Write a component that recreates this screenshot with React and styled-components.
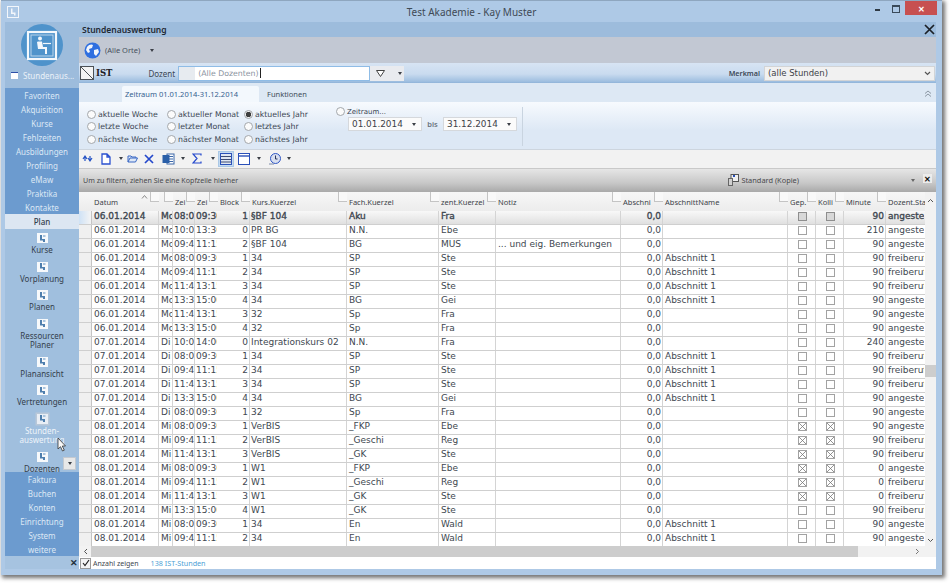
import React from 'react';
import styled, { createGlobalStyle } from 'styled-components';

const GlobalStyle = createGlobalStyle`
    html, body {
        margin: 0;
        padding: 0;
        background: #ffffff;
        font-family: "DejaVu Sans", sans-serif;
    }
`;

const UI_FONT = '"Noto Sans", "Open Sans", sans-serif';
const GRID_FONT = '"DejaVu Sans", sans-serif';

const Page = styled.div`
    width: 950px;
    height: 583px;
    overflow: hidden;
    background: #ffffff;
`;

const AppWindow = styled.div`
    display: flex;
    flex-direction: column;
    width: 941px;
    height: 575px;
    margin-left: 1px;
    background: #aec9e6;
    box-shadow: 2px 2px 4px 1px rgba(40, 40, 40, 0.65);
`;

const TitleBar = styled.div`
    position: relative;
    display: flex;
    align-items: center;
    justify-content: center;
    flex: 0 0 22px;
    font: 10px ${UI_FONT};
    color: #3f4a55;
    border-top: 1px solid #8ea6bf;
    box-sizing: border-box;
`;

const TitleIcon = styled.div`
    position: absolute;
    left: 6px;
    top: 5px;
    display: flex;
    align-items: center;
    justify-content: center;
    width: 10px;
    height: 10px;
    border: 1px solid #f2f6fb;
`;

const WindowButtons = styled.div`
    position: absolute;
    right: 5px;
    top: 0;
    display: flex;
    align-items: flex-start;
`;

const MinButton = styled.div`
    width: 5px;
    height: 2px;
    margin: 8px 12px 0 0;
    background: #2f3a45;
`;

const MaxButton = styled.div`
    width: 6px;
    height: 5px;
    margin: 4px 5px 0 0;
    border: 1px solid #3a4a5a;
    border-top-width: 2px;
`;

const CloseButton = styled.div`
    display: flex;
    align-items: center;
    justify-content: center;
    width: 32px;
    height: 14px;
    background: #c75050;
    color: #ffffff;
    font: bold 8px ${UI_FONT};
`;

const Body = styled.div`
    display: flex;
    flex: 1;
    min-height: 0;
    padding: 0 6px 6px 4px;
`;

const Sidebar = styled.div`
    display: flex;
    flex-direction: column;
    flex: 0 0 74px;
    background: #a0bfde;
    font: 8px ${UI_FONT};
`;

const SidebarHead = styled.div`
    display: flex;
    flex-direction: column;
    align-items: center;
    flex: 0 0 66px;
    padding-top: 1px;
    box-sizing: border-box;
    background: #9dbcdc;
`;

const ModuleLabel = styled.div`
    display: flex;
    align-items: center;
    align-self: stretch;
    gap: 5px;
    margin-top: 3px;
    padding-left: 6px;
    font-size: 8px;
    color: #eaf1f8;
    white-space: nowrap;
`;

const ModuleMark = styled.div`
    width: 7px;
    height: 6px;
    background: #ffffff;
    border-top: 1px solid #2d4fa8;
`;

const MenuBlock = styled.div`
    display: flex;
    flex-direction: column;
    flex: 0 0 auto;
    background: #6c9bcf;
`;

const MenuItem = styled.div`
    display: flex;
    align-items: center;
    justify-content: center;
    height: 14px;
    color: #dce8f5;
    white-space: nowrap;
`;

const ActiveMenu = styled.div`
    display: flex;
    align-items: center;
    justify-content: center;
    flex: 0 0 15px;
    background: #dce6f2;
    color: #33404d;
    font-weight: 500;
`;

const NavPanel = styled.div`
    position: relative;
    display: flex;
    flex-direction: column;
    flex: 1;
    min-height: 0;
    padding-top: 4px;
    box-sizing: border-box;
    background: #a0bfde;
`;

const NavItem = styled.div`
    display: flex;
    flex-direction: column;
    align-items: center;
    flex: 0 0 ${p => (p.$double ? 38 : 28.5)}px;
    box-sizing: border-box;
    color: ${p => (p.$active ? '#eef4fa' : '#34404c')};
    line-height: 9px;
    text-align: center;
`;

const NavLabel = styled.div`
    margin-top: 2px;
    white-space: pre-line;
`;

const NavIconBox = styled.div`
    display: flex;
    align-items: center;
    justify-content: center;
    width: 11px;
    height: 10px;
    background: ${p => (p.$active ? '#e9eef5' : '#f7f9fb')};
    box-shadow: ${p => (p.$active ? '0 0 0 1.5px #b9c8d8' : 'none')};
`;

const MoreButton = styled.div`
    position: absolute;
    right: 4px;
    bottom: 3px;
    display: flex;
    align-items: center;
    justify-content: center;
    width: 11px;
    height: 11px;
    background: #e8e8e8;
    box-shadow: 0 0 0 1px #c4c9d0;
`;

const MouseCursor = styled.svg`
    position: absolute;
    left: 52px;
    top: 208px;
`;

const SidebarFoot = styled.div`
    display: flex;
    align-items: center;
    justify-content: flex-end;
    flex: 0 0 12px;
    padding-right: 1px;
    background: #a6c3e0;
    color: #22303c;
    font: bold 9px ${UI_FONT};
`;

const Main = styled.div`
    display: flex;
    flex-direction: column;
    flex: 1;
    min-width: 0;
`;

const ModuleTitle = styled.div`
    display: flex;
    align-items: center;
    justify-content: space-between;
    flex: 0 0 15px;
    padding: 0 1px 1px 3px;
    box-sizing: border-box;
    background: #9dbcdc;
    color: #1f2933;
    font: 600 8.5px ${UI_FONT};
`;

const BigClose = styled.svg`
    display: block;
`;

const LocationBar = styled.div`
    display: flex;
    align-items: center;
    flex: 0 0 26px;
    padding-left: 5px;
    background: #c2c8d3;
    color: #46505c;
    font: 7.5px ${UI_FONT};
`;

const LocationText = styled.span`
    margin-left: 4px;
`;

const Caret = styled.div`
    flex: none;
    width: 0;
    height: 0;
    margin-left: ${p => p.$ml || 0}px;
    border-left: 2.5px solid transparent;
    border-right: 2.5px solid transparent;
    border-top: 3px solid ${p => p.$color || '#3b3f46'};
`;

const FilterBar = styled.div`
    display: flex;
    align-items: center;
    flex: 0 0 20px;
    padding-left: 1px;
    background: linear-gradient(#d7e4f3 0%, #c9dbef 55%, #9fbfe0 92%, #8fb3d8 100%);
`;

const ActualBox = styled.div`
    flex: 0 0 14px;
    height: 14px;
    background: #f4f4f4;
    border: 1px solid #4c5156;
    box-sizing: border-box;
    background-image: linear-gradient(45deg, #f4f4f4 46%, #4c5156 48%, #4c5156 52%, #f4f4f4 54%);
`;

const ActualLabel = styled.div`
    margin-left: 2px;
    color: #1c2026;
    font: bold 8.5px "DejaVu Serif", serif;
`;

const DozentLabel = styled.div`
    margin-left: 36px;
    color: #3a4654;
    font: 8px ${UI_FONT};
`;

const DozentInput = styled.div`
    display: flex;
    align-items: center;
    width: 192px;
    height: 15px;
    margin-left: 3px;
    box-sizing: border-box;
    background: #ffffff;
    border: 1px solid #8fbce6;
    color: #8b93a0;
    font: 7.8px ${GRID_FONT};
`;

const DozentStub = styled.div`
    align-self: stretch;
    flex: 0 0 16px;
    margin-right: 3px;
    background: #e7ebf0;
`;

const TextCaret = styled.span`
    width: 1px;
    height: 10px;
    margin-left: 1px;
    background: #222222;
`;

const FilterButtons = styled.div`
    display: flex;
    align-items: center;
    width: 34px;
    height: 15px;
    padding-left: 6px;
    box-sizing: border-box;
    background: #e9ebef;
`;

const MerkmalLabel = styled.div`
    margin-left: auto;
    color: #3b4856;
    font: 600 7.2px ${UI_FONT};
`;

const MerkmalSelect = styled.div`
    display: flex;
    align-items: center;
    justify-content: space-between;
    width: 171px;
    height: 15px;
    margin: 0 1px 0 4px;
    padding: 0 3px 0 3px;
    box-sizing: border-box;
    background: #f1f1f1;
    border: 1px solid #d2d4d6;
    color: #3d4148;
    font: 8.5px ${GRID_FONT};
`;

const TabStrip = styled.div`
    display: flex;
    align-items: flex-end;
    flex: 0 0 19px;
    padding-left: 43px;
    background: #dde8f4;
    font: 7.5px ${UI_FONT};
`;

const ActiveTab = styled.div`
    display: flex;
    align-items: center;
    height: 16px;
    padding: 0 24px 0 3px;
    box-sizing: border-box;
    width: 137px;
    white-space: nowrap;
    background: #f3f8fd;
    border-radius: 2px 2px 0 0;
    color: #33618f;
`;

const Tab = styled.div`
    display: flex;
    align-items: center;
    height: 16px;
    margin-left: 8px;
    color: #3f4c5a;
`;

const CollapseIcon = styled.svg`
    margin: 0 4px 5px auto;
`;

const Ribbon = styled.div`
    display: flex;
    flex: 0 0 45px;
    box-sizing: border-box;
    padding: 6px 0 3px 8px;
    background: linear-gradient(#f7fafe, #dde8f5 60%);
    border-bottom: 1px solid #cdd5de;
    font: 8px ${GRID_FONT};
    color: #3a4552;
`;

const RadioGrid = styled.div`
    display: grid;
    grid-template-columns: 80px 77px 92px;
    grid-auto-rows: 12.5px;
`;

const RadioRow = styled.div`
    display: flex;
    align-items: center;
    gap: 2px;
    white-space: nowrap;
    font-size: ${p => (p.$small ? 7 : 7.8)}px;
`;

const RadioDot = styled.div`
    flex: none;
    width: 9px;
    height: 9px;
    box-sizing: border-box;
    border-radius: 50%;
    background: ${p => (p.$on ? 'radial-gradient(circle, #3f3f3f 0 2.5px, #f4f4f4 3px)' : '#fbfbfb')};
    border: 1px solid #a3a7ab;
`;

const RangeGroup = styled.div`
    display: flex;
    flex-direction: column;
    margin-top: -1px;
    padding-right: 5px;
    border-right: 1px solid #c9d4e0;
`;

const RangeRow = styled.div`
    display: flex;
    align-items: center;
    margin-top: 1px;
    padding-left: 12px;
`;

const DateField = styled.div`
    display: flex;
    align-items: center;
    justify-content: space-between;
    width: 74px;
    height: 14px;
    padding: 0 5px 0 3px;
    box-sizing: border-box;
    background: #fbfbfb;
    border: 1px solid #d5d8dc;
    color: #3d4148;
    font-size: 8.9px;
`;

const BisLabel = styled.div`
    width: 21px;
    text-align: center;
    font: 600 7.5px ${UI_FONT};
    color: #6a7480;
`;

const Toolbar = styled.div`
    display: flex;
    align-items: center;
    flex: 0 0 19px;
    padding-left: 3px;
    box-sizing: border-box;
    background: #f2f2f2;
    border-bottom: 1px solid #c9c9c9;
`;

const ToolSlot = styled.div`
    display: flex;
    align-items: center;
    justify-content: center;
    flex: none;
    width: ${p => p.$w}px;
    height: 16px;
    margin-left: ${p => p.$ml || 0}px;
    background: ${p => (p.$on ? '#c5daf0' : 'transparent')};
    box-shadow: ${p => (p.$on ? 'inset 0 0 0 1px #aac8e6' : 'none')};
`;

const GroupBar = styled.div`
    display: flex;
    align-items: center;
    flex: 0 0 23px;
    padding: 0 3px 0 4px;
    box-sizing: border-box;
    background: linear-gradient(#e6e6e6, #c8c8c8 60%, #a9a9a9);
    color: #49494c;
    font: 7.1px ${UI_FONT};
`;

const LayoutName = styled.div`
    display: flex;
    align-items: center;
    gap: 2px;
    margin-left: auto;
    margin-right: 112px;
    font-size: 7.4px;
`;

const GroupClose = styled.div`
    display: flex;
    align-items: center;
    justify-content: center;
    width: 9px;
    height: 9px;
    margin: 0 1px 3px 8px;
    background: #ececec;
    color: #111111;
    font: bold 8px ${UI_FONT};
`;

const GridArea = styled.div`
    display: flex;
    flex: 1;
    min-height: 0;
    background: #ffffff;
`;

const GridTable = styled.div`
    flex: 1;
    min-width: 0;
    overflow: hidden;
`;

const COLUMNS = '13px 67px 14px 22px 23px 32px 97px 92px 57px 125px 42px 125px 28px 28px 42px 39px';

const HeaderRow = styled.div`
    display: grid;
    grid-template-columns: ${COLUMNS};
    height: 19px;
    background: linear-gradient(#f7f7f7, #ececec);
`;

const HeaderCell = styled.div`
    position: relative;
    display: flex;
    align-items: flex-start;
    padding: 5px 0 0 2px;
    box-sizing: border-box;
    overflow: hidden;
    white-space: nowrap;
    color: #3c4248;
    font: 7.5px / 10px ${UI_FONT};

    &::after {
        content: '';
        display: ${p => (p.$plain ? 'none' : 'block')};
        position: absolute;
        right: 0;
        top: 0;
        width: 8px;
        height: 9px;
        background: #f9f9f9;
        border-left: 1px solid #c4c4c4;
        border-bottom: 1px solid #c4c4c4;
    }
`;

const SortArrow = styled.svg`
    position: absolute;
    right: 11px;
    top: 3px;
    z-index: 1;
`;

const DataRow = styled.div`
    display: grid;
    grid-template-columns: ${COLUMNS};
    grid-template-rows: 13px;
    height: 14px;
    box-sizing: border-box;
    border-bottom: 1px solid #cfcfcf;
    background: ${p => (p.$current ? 'linear-gradient(#f8f8f8, #e0e0e0)' : '#ffffff')};
    color: #3e4750;
    font: normal 9px / 11px ${GRID_FONT};
    -webkit-text-stroke: ${p => (p.$current ? '0.35px #3e4750' : '0')};
`;

const SelectorCell = styled.div`
    background: ${p => (p.$current ? 'linear-gradient(90deg, #cfe2f6, #f4f4f4)' : '#f0f0f0')};
    border-right: 1px solid #c4c4c4;
`;

const DataCell = styled.div`
    display: flex;
    align-items: flex-start;
    justify-content: ${p => (p.$align === 'right' ? 'flex-end' : p.$align === 'center' ? 'center' : 'flex-start')};
    padding: ${p => (p.$align === 'center' ? 1 : 0)}px ${p => (p.$align === 'right' ? 1 : 0)}px 0 ${p => (p.$align === 'right' ? 0 : p.$pad ?? 2)}px;
    box-sizing: border-box;
    overflow: hidden;
    white-space: nowrap;
    border-right: 1px solid ${p => (p.$divider ? '#d4d4d4' : 'transparent')};
`;

const CheckMark = styled.svg`
    display: block;
`;

const VScroll = styled.div`
    display: flex;
    flex-direction: column;
    align-items: center;
    flex: 0 0 11px;
    background: #f2f2f2;
`;

const ScrollUp = styled.svg`
    margin-top: 6px;
`;

const ScrollThumb = styled.div`
    flex: 0 0 12px;
    align-self: stretch;
    margin-top: 162px;
    background: #cdcdcd;
`;

const ScrollDown = styled.svg`
    margin-top: auto;
    margin-bottom: 3px;
`;

const HScroll = styled.div`
    display: flex;
    align-items: stretch;
    flex: 0 0 11px;
    background: #f2f2f2;
`;

const HScrollEnd = styled.div`
    display: flex;
    align-items: center;
    justify-content: ${p => p.$justify};
    flex: ${p => p.$flex};
    padding: 0 ${p => p.$pad}px;
    background: ${p => p.$bg || 'transparent'};
`;

const HThumb = styled.div`
    flex: 0 0 767px;
    background: #cdcdcd;
`;

const StatusBar = styled.div`
    display: flex;
    align-items: center;
    flex: 0 0 12px;
    padding-left: 1px;
    background: #ffffff;
    color: #3e4750;
    font: 7px ${UI_FONT};
`;

const StatusCheck = styled.div`
    display: flex;
    align-items: center;
    justify-content: center;
    width: 9px;
    height: 9px;
    margin-right: 2px;
    background: #f4f4f4;
    border: 1px solid #9a9a9a;
`;

const StatusCount = styled.div`
    margin-left: 12px;
    color: #4d9fd6;
    font-size: 7.2px;
`;

const LogoMark = () => (
    <svg width="44" height="44" viewBox="0 0 44 44">
        <circle cx="22" cy="22" r="21" fill="#4f93cb" />
        <rect x="8" y="9" width="28" height="27" fill="#4f93cb" stroke="#f4f8fc" strokeWidth="2.2" />
        <rect x="11" y="12" width="22" height="21" fill="none" stroke="#bcd6ec" strokeWidth="1" />
        <circle cx="20" cy="15.500" r="2" fill="#f4f8fc" />
        <path d="M18 18.500h4l1 5.500h4v7h-2v-5h-7l-1-7z" fill="#f4f8fc" />
        <path d="M23 20.500h8" stroke="#f4f8fc" strokeWidth="1.200" />
    </svg>
);

const NavGlyph = () => (
    <svg width="9" height="9" viewBox="0 0 9 9">
        <path d="M2 1h2v4h3v3H5V6.500H2z" fill="#4f7fae" />
        <rect x="5" y="1" width="2.500" height="2" fill="#a9c4de" />
    </svg>
);

const Funnel = () => (
    <svg width="9" height="7" viewBox="0 0 9 7">
        <path d="M0.500 0.500h8L4.500 6.500z" fill="#ffffff" stroke="#444444" />
    </svg>
);

const Globe = ({ size = 17 }) => (
    <svg width={size} height={size} viewBox="0 0 17 17">
        <circle cx="8.500" cy="8.500" r="8" fill="#2f6fe0" />
        <path d="M3 5c2-3 5-3 6-2l-1 3-3 1 1 3-2 1-2-3zM10 8l4-1 1 3-3 4-2-2z" fill="#f3f6fb" />
    </svg>
);

const ToolIcons = {
    sync: (
        <svg width="11" height="9" viewBox="0 0 11 9">
            <path d="M1 5l2-3 2 3M3 2v5M10 4L8 7 6 4M8 7V2" fill="none" stroke="#2452c4" strokeWidth="1.2" />
        </svg>
    ),
    doc: (
        <svg width="10" height="12" viewBox="0 0 10 12">
            <path d="M1 1h5l3 3v7H1zM6 1v3h3" fill="#ffffff" stroke="#2a50d0" strokeWidth="1.3" />
        </svg>
    ),
    open: (
        <svg width="11" height="9" viewBox="0 0 11 9">
            <path d="M1 8V2h3l1 1h4v1M1 8l2-4h7.500l-2 4z" fill="#dfe9f7" stroke="#3a68c4" />
        </svg>
    ),
    del: (
        <svg width="10" height="10" viewBox="0 0 10 10">
            <path d="M1 1l8 8M9 1L1 9" stroke="#2448cc" strokeWidth="1.7" />
        </svg>
    ),
    word: (
        <svg width="13" height="12" viewBox="0 0 13 12">
            <rect x="5" y="1" width="7" height="10" fill="#ffffff" stroke="#3a66a8" />
            <path d="M7 3.500h4M7 6h4M7 8.500h4" stroke="#3a66a8" />
            <rect x="0.500" y="2" width="7" height="8" fill="#2a5fa8" />
        </svg>
    ),
    sigma: (
        <svg width="10" height="11" viewBox="0 0 10 11">
            <path d="M9 2.500V1H1l4 4.500L1 10h8V8.500" fill="none" stroke="#2448cc" strokeWidth="1.2" />
        </svg>
    ),
    panes: (
        <svg width="12" height="12" viewBox="0 0 12 12">
            <rect x="0.500" y="0.500" width="11" height="11" fill="#dfe6f2" stroke="#2a50b8" />
            <path d="M1 3.500h10M1 6.500h10M1 9h10" stroke="#3e4c74" />
        </svg>
    ),
    pane: (
        <svg width="12" height="12" viewBox="0 0 12 12">
            <rect x="0.500" y="0.500" width="11" height="11" fill="#ffffff" stroke="#2a50b8" />
            <path d="M1 3h10" stroke="#2a50b8" strokeWidth="1.4" />
        </svg>
    ),
    clock: (
        <svg width="12" height="12" viewBox="0 0 12 12">
            <circle cx="6.500" cy="5.500" r="5" fill="#d8dff0" stroke="#2f56c4" />
            <path d="M6.500 2.500v3.500h2" fill="none" stroke="#27355e" />
            <path d="M0 11h5" stroke="#7c8aa8" />
        </svg>
    ),
};

const TOOLS = [
    { icon: 'sync', w: 11 },
    { icon: 'doc', w: 10, ml: 8 },
    { caret: true, ml: 8 },
    { icon: 'open', w: 11, ml: 4 },
    { icon: 'del', w: 10, ml: 6 },
    { icon: 'word', w: 13, ml: 8 },
    { caret: true, ml: 6 },
    { icon: 'sigma', w: 10, ml: 7 },
    { caret: true, ml: 9 },
    { icon: 'panes', w: 16, ml: 3, on: true },
    { icon: 'pane', w: 12, ml: 4 },
    { caret: true, ml: 7 },
    { icon: 'clock', w: 12, ml: 8 },
    { caret: true, ml: 6 },
];

const MENU_TOP = ['Favoriten', 'Akquisition', 'Kurse', 'Fehlzeiten', 'Ausbildungen', 'Profiling', 'eMaw', 'Praktika', 'Kontakte'];
const MENU_BOTTOM = ['Faktura', 'Buchen', 'Konten', 'Einrichtung', 'System', 'weitere'];

const NAV_ITEMS = [
    { label: 'Kurse' },
    { label: 'Vorplanung' },
    { label: 'Planen' },
    { label: 'Ressourcen\nPlaner', double: true },
    { label: 'Planansicht' },
    { label: 'Vertretungen' },
    { label: 'Stunden-\nauswertung', double: true, active: true },
    { label: 'Dozenten' },
];

const RADIOS = [
    ['aktuelle Woche', 'aktueller Monat', 'aktuelles Jahr'],
    ['letzte Woche', 'letzter Monat', 'letztes Jahr'],
    ['nächste Woche', 'nächster Monat', 'nächstes Jahr'],
];

const HEADERS = ['', 'Datum', '', 'Zei', 'Zei', 'Block', 'Kurs.Kuerzel', 'Fach.Kuerzel', 'zent.Kuerzel', 'Notiz', 'Abschni', 'AbschnittName', 'Gep.', 'Kolli', 'Minute', 'Dozent.Status'];

const SLOTS = {
    1: ['08:00', '09:30'],
    2: ['09:45', '11:15'],
    3: ['11:45', '13:15'],
    4: ['13:30', '15:00'],
};

const A = 'angestellt';
const F = 'freiberuflich';
const S1 = 'Abschnitt 1';

function row(date, day, block, kurs, fach, zent, name, checked, minutes, status) {
    const [from, to] = SLOTS[block];
    return { date, day, from, to, block, kurs, fach, zent, note: '', name, checked, minutes, status };
}

const ROWS = [
    { ...row('06.01.2014', 'Mo', 1, '§BF 104', 'Aku', 'Fra', '', false, 90, A), current: true },
    { ...row('06.01.2014', 'Mo', 1, 'PR BG', 'N.N.', 'Ebe', '', false, 210, A), from: '10:00', to: '13:30', block: 0 },
    { ...row('06.01.2014', 'Mo', 2, '§BF 104', 'BG', 'MUS', '', false, 90, A), note: '... und eig. Bemerkungen' },
    row('06.01.2014', 'Mo', 1, '34', 'SP', 'Ste', S1, false, 90, F),
    row('06.01.2014', 'Mo', 2, '34', 'SP', 'Ste', S1, false, 90, F),
    row('06.01.2014', 'Mo', 3, '34', 'SP', 'Ste', S1, false, 90, F),
    row('06.01.2014', 'Mo', 4, '34', 'BG', 'Gei', S1, false, 90, A),
    row('06.01.2014', 'Mo', 3, '32', 'Sp', 'Fra', '', false, 90, A),
    row('06.01.2014', 'Mo', 4, '32', 'Sp', 'Fra', '', false, 90, A),
    { ...row('07.01.2014', 'Di', 1, 'Integrationskurs 02', 'N.N.', 'Fra', '', false, 240, A), from: '10:00', to: '14:00', block: 0 },
    row('07.01.2014', 'Di', 1, '34', 'SP', 'Ste', S1, false, 90, F),
    row('07.01.2014', 'Di', 2, '34', 'SP', 'Ste', S1, false, 90, F),
    row('07.01.2014', 'Di', 3, '34', 'SP', 'Ste', S1, false, 90, F),
    row('07.01.2014', 'Di', 4, '34', 'BG', 'Gei', S1, false, 90, A),
    row('07.01.2014', 'Di', 1, '32', 'Sp', 'Fra', '', false, 90, A),
    row('08.01.2014', 'Mi', 1, 'VerBIS', '_FKP', 'Ebe', '', true, 90, A),
    row('08.01.2014', 'Mi', 2, 'VerBIS', '_Geschi', 'Reg', '', true, 90, F),
    row('08.01.2014', 'Mi', 3, 'VerBIS', '_GK', 'Ste', '', true, 90, F),
    row('08.01.2014', 'Mi', 1, 'W1', '_FKP', 'Ebe', '', true, 0, A),
    row('08.01.2014', 'Mi', 2, 'W1', '_Geschi', 'Reg', '', true, 0, F),
    row('08.01.2014', 'Mi', 3, 'W1', '_GK', 'Ste', '', true, 0, F),
    row('08.01.2014', 'Mi', 4, 'W1', '_GK', 'Ste', '', false, 90, F),
    row('08.01.2014', 'Mi', 1, '34', 'En', 'Wald', S1, false, 90, A),
    row('08.01.2014', 'Mi', 2, '34', 'En', 'Wald', S1, false, 90, A),
];

function CheckBox({ crossed, current }) {
    return (
        <CheckMark width="9" height="9" viewBox="0 0 9 9">
            <rect x="0.500" y="0.500" width="8" height="8" fill={current ? '#d8d8d8' : '#ffffff'} stroke={current ? '#8e8e8e' : '#a2a2a2'} />
            {crossed && <path d="M1 1l7 7M8 1L1 8" stroke="#777777" strokeWidth="0.8" />}
        </CheckMark>
    );
}

function GridRow({ data }) {
    return (
        <DataRow $current={data.current}>
            <SelectorCell $current={data.current} />
            <DataCell $divider>{data.date}</DataCell>
            <DataCell $divider>{data.day}</DataCell>
            <DataCell $divider $pad={1}>{data.from}</DataCell>
            <DataCell $pad={1}>{data.to}</DataCell>
            <DataCell $align="right" $divider>{data.block}</DataCell>
            <DataCell $divider $pad={1}>{data.kurs}</DataCell>
            <DataCell $divider>{data.fach}</DataCell>
            <DataCell $divider>{data.zent}</DataCell>
            <DataCell $divider>{data.note}</DataCell>
            <DataCell $align="right" $divider>0,0</DataCell>
            <DataCell $divider>{data.name}</DataCell>
            <DataCell $align="center" $divider><CheckBox crossed={data.checked} current={data.current} /></DataCell>
            <DataCell $align="center" $divider><CheckBox crossed={data.checked} current={data.current} /></DataCell>
            <DataCell $align="right" $divider>{data.minutes}</DataCell>
            <DataCell $pad={2}>{data.status}</DataCell>
        </DataRow>
    );
}

function AppSidebar() {
    return (
        <Sidebar>
            <SidebarHead>
                <LogoMark />
                <ModuleLabel><ModuleMark />Stundenaus...</ModuleLabel>
            </SidebarHead>
            <MenuBlock>
                {MENU_TOP.map(item => <MenuItem key={item}>{item}</MenuItem>)}
            </MenuBlock>
            <ActiveMenu>Plan</ActiveMenu>
            <NavPanel>
                {NAV_ITEMS.map(item => (
                    <NavItem key={item.label} $double={item.double} $active={item.active}>
                        <NavIconBox $active={item.active}><NavGlyph /></NavIconBox>
                        <NavLabel>{item.label}</NavLabel>
                    </NavItem>
                ))}
                <MoreButton><Caret /></MoreButton>
                <MouseCursor width="9" height="15" viewBox="0 0 9 15">
                    <path d="M1 1v11l2.500-2.300L5.500 14l1.800-.8-2-4.200H8.500z" fill="#f8f8f8" stroke="#333333" strokeWidth="0.8" />
                </MouseCursor>
            </NavPanel>
            <MenuBlock>
                {MENU_BOTTOM.map(item => <MenuItem key={item}>{item}</MenuItem>)}
            </MenuBlock>
            <SidebarFoot>✕</SidebarFoot>
        </Sidebar>
    );
}

function App() {
    return (
        <Page>
            <GlobalStyle />
            <AppWindow>
                <TitleBar>
                    <TitleIcon>
                        <svg width="8" height="8" viewBox="0 0 8 8">
                            <path d="M2 0.500h1.500v4h3v3h-1.500V6H2z" fill="#f2f6fb" />
                        </svg>
                    </TitleIcon>
                    Test Akademie - Kay Muster
                    <WindowButtons>
                        <MinButton />
                        <MaxButton />
                        <CloseButton>✕</CloseButton>
                    </WindowButtons>
                </TitleBar>
                <Body>
                    <AppSidebar />
                    <Main>
                        <ModuleTitle>
                            Stundenauswertung
                            <BigClose width="11" height="11" viewBox="0 0 11 11">
                                <path d="M1 1l9 9M10 1l-9 9" stroke="#1b2026" strokeWidth="1.7" />
                            </BigClose>
                        </ModuleTitle>
                        <LocationBar>
                            <Globe />
                            <LocationText>(Alle Orte)</LocationText>
                            <Caret $ml={10} />
                        </LocationBar>
                        <FilterBar>
                            <ActualBox />
                            <ActualLabel>IST</ActualLabel>
                            <DozentLabel>Dozent</DozentLabel>
                            <DozentInput>
                                <DozentStub />
                                (Alle Dozenten)
                                <TextCaret />
                            </DozentInput>
                            <FilterButtons>
                                <Funnel />
                                <Caret $ml={13} />
                            </FilterButtons>
                            <MerkmalLabel>Merkmal</MerkmalLabel>
                            <MerkmalSelect>
                                (alle Stunden)
                                <svg width="7" height="5" viewBox="0 0 7 5">
                                    <path d="M1 1l2.500 2.500L6 1" fill="none" stroke="#555555" strokeWidth="1.2" />
                                </svg>
                            </MerkmalSelect>
                        </FilterBar>
                        <TabStrip>
                            <ActiveTab>Zeitraum 01.01.2014-31.12.2014</ActiveTab>
                            <Tab>Funktionen</Tab>
                            <CollapseIcon width="8" height="7" viewBox="0 0 8 7">
                                <path d="M1 3.500L4 1l3 2.500M1 6.500L4 4l3 2.500" fill="none" stroke="#8b97a3" />
                            </CollapseIcon>
                        </TabStrip>
                        <Ribbon>
                            <RadioGrid>
                                {RADIOS.flat().map(label => (
                                    <RadioRow key={label}>
                                        <RadioDot $on={label === 'aktuelles Jahr'} />
                                        {label}
                                    </RadioRow>
                                ))}
                            </RadioGrid>
                            <RangeGroup>
                                <RadioRow $small>
                                    <RadioDot />
                                    Zeitraum...
                                </RadioRow>
                                <RangeRow>
                                    <DateField>01.01.2014<Caret /></DateField>
                                    <BisLabel>bis</BisLabel>
                                    <DateField>31.12.2014<Caret /></DateField>
                                </RangeRow>
                            </RangeGroup>
                        </Ribbon>
                        <Toolbar>
                            {TOOLS.map((tool, i) => (
                                tool.caret
                                    ? <Caret key={i} $ml={tool.ml} />
                                    : <ToolSlot key={i} $w={tool.w} $ml={tool.ml} $on={tool.on}>{ToolIcons[tool.icon]}</ToolSlot>
                            ))}
                        </Toolbar>
                        <GroupBar>
                            Um zu filtern, ziehen Sie eine Kopfzeile hierher
                            <LayoutName>
                                <svg width="11" height="12" viewBox="0 0 11 12">
                                    <rect x="3" y="0.500" width="7.500" height="7" fill="#f0f0f0" stroke="#555555" />
                                    <rect x="0.500" y="4.500" width="4" height="7" fill="#d0d0d0" stroke="#666666" />
                                    <rect x="5" y="1" width="2" height="2" fill="#2a50b8" />
                                </svg>
                                Standard (Kopie)
                            </LayoutName>
                            <Caret $color="#666666" />
                            <GroupClose>✕</GroupClose>
                        </GroupBar>
                        <GridArea>
                            <GridTable>
                                <HeaderRow>
                                    {HEADERS.map((label, i) => (
                                        <HeaderCell key={i} $plain={i === 0 || i === HEADERS.length - 1}>
                                            {i === 1 && (
                                                <SortArrow width="7" height="4" viewBox="0 0 7 4">
                                                    <path d="M1 3.500l2.500-3L6 3.500" fill="none" stroke="#8a8a8a" />
                                                </SortArrow>
                                            )}
                                            {label}
                                        </HeaderCell>
                                    ))}
                                </HeaderRow>
                                {ROWS.map((data, i) => <GridRow key={i} data={data} />)}
                            </GridTable>
                            <VScroll>
                                <ScrollUp width="7" height="5" viewBox="0 0 7 5">
                                    <path d="M1 4l2.500-2.500L6 4" fill="none" stroke="#555555" />
                                </ScrollUp>
                                <ScrollThumb />
                                <ScrollDown width="7" height="5" viewBox="0 0 7 5">
                                    <path d="M1 1l2.500 2.500L6 1" fill="none" stroke="#555555" />
                                </ScrollDown>
                            </VScroll>
                        </GridArea>
                        <HScroll>
                            <HScrollEnd $flex="0 0 12px" $justify="center" $pad={0}>
                                <svg width="5" height="7" viewBox="0 0 5 7">
                                    <path d="M4 1L1.500 3.500 4 6" fill="none" stroke="#555555" />
                                </svg>
                            </HScrollEnd>
                            <HThumb />
                            <HScrollEnd $flex="1" $justify="flex-end" $pad={16}>
                                <svg width="5" height="7" viewBox="0 0 5 7">
                                    <path d="M1 1l2.500 2.500L1 6" fill="none" stroke="#777777" />
                                </svg>
                            </HScrollEnd>
                        </HScroll>
                        <StatusBar>
                            <StatusCheck>
                                <svg width="8" height="8" viewBox="0 0 8 8">
                                    <path d="M1 4l2 2.500L7 1" fill="none" stroke="#222222" strokeWidth="1.2" />
                                </svg>
                            </StatusCheck>
                            Anzahl zeigen
                            <StatusCount>138 IST-Stunden</StatusCount>
                        </StatusBar>
                    </Main>
                </Body>
            </AppWindow>
        </Page>
    );
}

export default App;
